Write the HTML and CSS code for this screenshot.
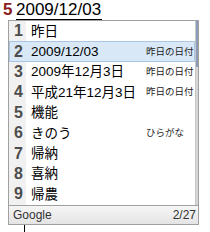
FILE: index.html
```html
<!DOCTYPE html>
<html>
<head>
<meta charset="utf-8">
<link rel="stylesheet" href="styles.css">
</head>
<body>
<div class="top">
  <span class="idx">5</span>
  <span class="comp">2009/12/03</span>
</div>
<div class="popup">
  <div class="list">
    <div class="rows">
      <div class="row"><span class="num">1</span><span class="cand">昨日</span><span class="ann"></span></div>
      <div class="row sel"><span class="num">2</span><span class="cand">2009/12/03</span><span class="ann">昨日の日付</span></div>
      <div class="row"><span class="num">3</span><span class="cand">2009年12月3日</span><span class="ann">昨日の日付</span></div>
      <div class="row"><span class="num">4</span><span class="cand">平成21年12月3日</span><span class="ann">昨日の日付</span></div>
      <div class="row"><span class="num">5</span><span class="cand">機能</span><span class="ann"></span></div>
      <div class="row"><span class="num">6</span><span class="cand">きのう</span><span class="ann">ひらがな</span></div>
      <div class="row"><span class="num">7</span><span class="cand">帰納</span><span class="ann"></span></div>
      <div class="row"><span class="num">8</span><span class="cand">喜納</span><span class="ann"></span></div>
      <div class="row"><span class="num">9</span><span class="cand">帰農</span><span class="ann"></span></div>
    </div>
    <div class="scroll"><div class="thumb"></div></div>
  </div>
  <div class="foot"><span class="brand">Google</span><span class="count">2/27</span></div>
</div>
<div class="caret"></div>
</body>
</html>
```
FILE: styles.css
```css
html, body { margin: 0; padding: 0; }
body {
  width: 210px; height: 232px; overflow: hidden; background: #fff;
  font-family: "Liberation Sans", "Noto Sans CJK JP", sans-serif;
  position: relative;
}
.top { height: 21px; display: flex; align-items: flex-start; }
.idx {
  margin-left: 3px; margin-top: 1px; width: 13px;
  font-weight: bold; color: #8b1c1c; font-size: 17px; line-height: 18px;
}
.comp {
  font-size: 17px; line-height: 18px; margin-top: 1px;
  color: #000; border-bottom: 1px solid #000; padding-right: 1px;
}
.popup {
  margin-left: 8px; width: 189px;
  border: 1px solid #a0a0a0; margin-top: -1px;
}
.list { display: flex; height: 184px; overflow: hidden; }
.rows {
  flex: 1; background: linear-gradient(to right, #f1f1f1 0, #f1f1f1 17px, #fff 17px);
}
.row {
  height: 20.4px; display: flex; align-items: center; box-sizing: border-box;
  border: 1px solid transparent;
}
.row.sel { background: #d8e8f6; border-color: #a9c6e4; }
.num {
  width: 17px; text-align: center; font-weight: bold; color: #4d4d4d;
  font-size: 16px; line-height: 18px;
}
.cand {
  margin-left: 4px; width: 115px; font-size: 13.5px; line-height: 17px; color: #000;
  white-space: nowrap;
}
.ann { font-size: 9.5px; line-height: 12px; color: #222; white-space: nowrap; }
.scroll { width: 7px; background: #d6d6d6; border-left: 1px solid #c8c8c8; }
.thumb { height: 46px; background: #8c9cb8; }
.foot {
  height: 18px; border-top: 1px solid #a0a0a0;
  background: linear-gradient(#f6f6f6, #e4e4e4);
  display: flex; justify-content: space-between; align-items: center;
  padding: 0 2px 0 4px; color: #333;
}
.brand { font-size: 12px; }
.count { font-size: 12px; }
.caret {
  position: absolute; left: 24px; top: 225px; width: 1px; height: 7px; background: #000;
}
```
